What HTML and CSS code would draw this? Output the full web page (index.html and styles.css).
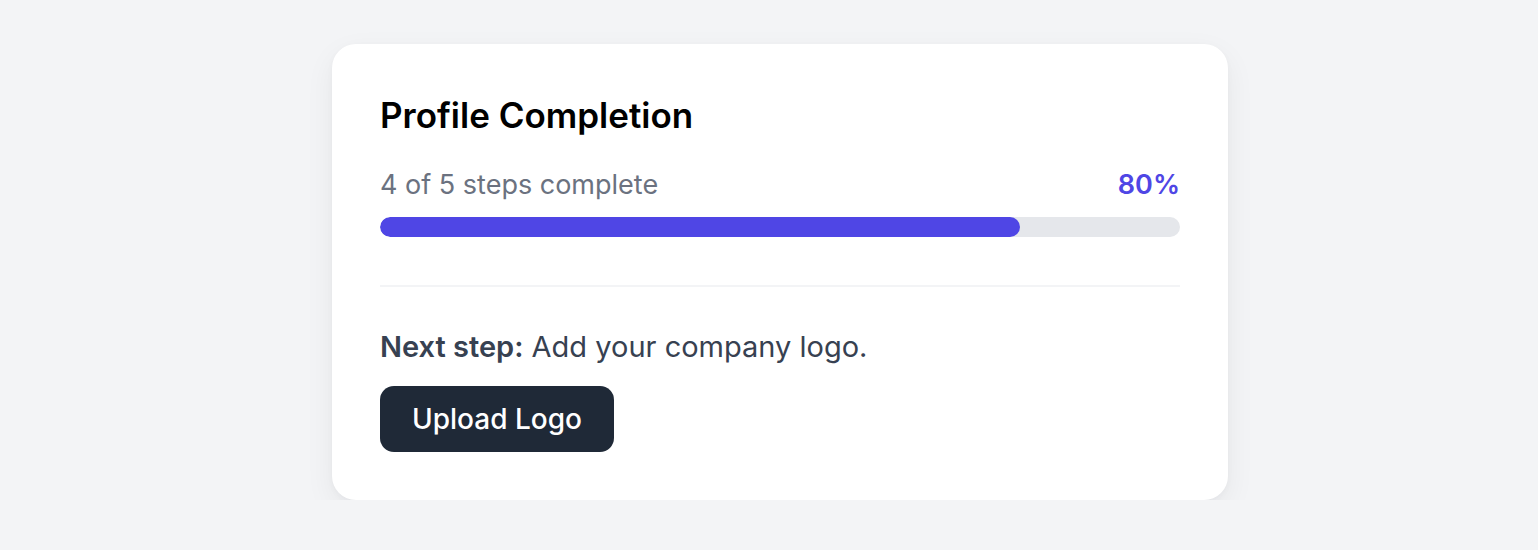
FILE: index.html
```html
<!DOCTYPE html>
<html lang="en">
  <head>
    <meta charset="utf-8">
    <title>Profile Completion</title>
    <link rel="stylesheet" href="styles.css">
  </head>
  <body>
    <div class="page">
      <div class="card">
        <h2 class="card_title">Profile Completion</h2>
        <div class="progress_head">
          <span class="progress_label">4 of 5 steps complete</span>
          <span class="progress_value">80%</span>
        </div>
        <div class="progress_track">
          <div class="progress_fill" style="width: 80%"></div>
        </div>
        <hr class="divider">
        <p class="next_step"><strong>Next step:</strong> Add your company logo.</p>
        <button class="upload_btn" type="button">Upload Logo</button>
      </div>
    </div>
  </body>
</html>
```

FILE: styles.css
```css
* { box-sizing: border-box; }

body {
  margin: 0;
  background: #f3f4f6;
  font-family: Inter, "Noto Sans", sans-serif;
}

.page {
  display: flex;
  justify-content: center;
  padding: 44px 0 0 22px;
}

.card {
  width: 896px;
  background: #fff;
  border-radius: 24px;
  padding: 48px;
  box-shadow: 0 10px 30px rgba(17, 24, 39, 0.06), 0 2px 6px rgba(17, 24, 39, 0.03);
}

.card_title {
  margin: 0;
  font-size: 35px;
  line-height: 46px;
  font-weight: 600;
  color: #000;
}

.progress_head {
  display: flex;
  justify-content: space-between;
  align-items: baseline;
  margin-top: 30px;
  font-size: 27px;
  line-height: 34px;
}

.progress_label { color: #6b7280; }
.progress_value { color: #4f46e5; font-weight: 600; }

.progress_track {
  margin-top: 15px;
  height: 20px;
  background: #e5e7eb;
  border-radius: 10px;
  overflow: hidden;
}

.progress_fill {
  height: 100%;
  background: #4f46e5;
  border-radius: 10px;
}

.divider {
  margin: 48px 0 0;
  border: 0;
  border-top: 2px solid #f3f4f6;
}

.next_step {
  margin: 41px 0 0;
  font-size: 29px;
  line-height: 38px;
  color: #374151;
}

.next_step strong { font-weight: 600; }

.upload_btn {
  display: block;
  margin-top: 20px;
  height: 66px;
  padding: 0 32px;
  border: 0;
  border-radius: 14px;
  background: #1f2937;
  color: #fff;
  font-family: inherit;
  font-size: 28px;
  font-weight: 500;
}
```
